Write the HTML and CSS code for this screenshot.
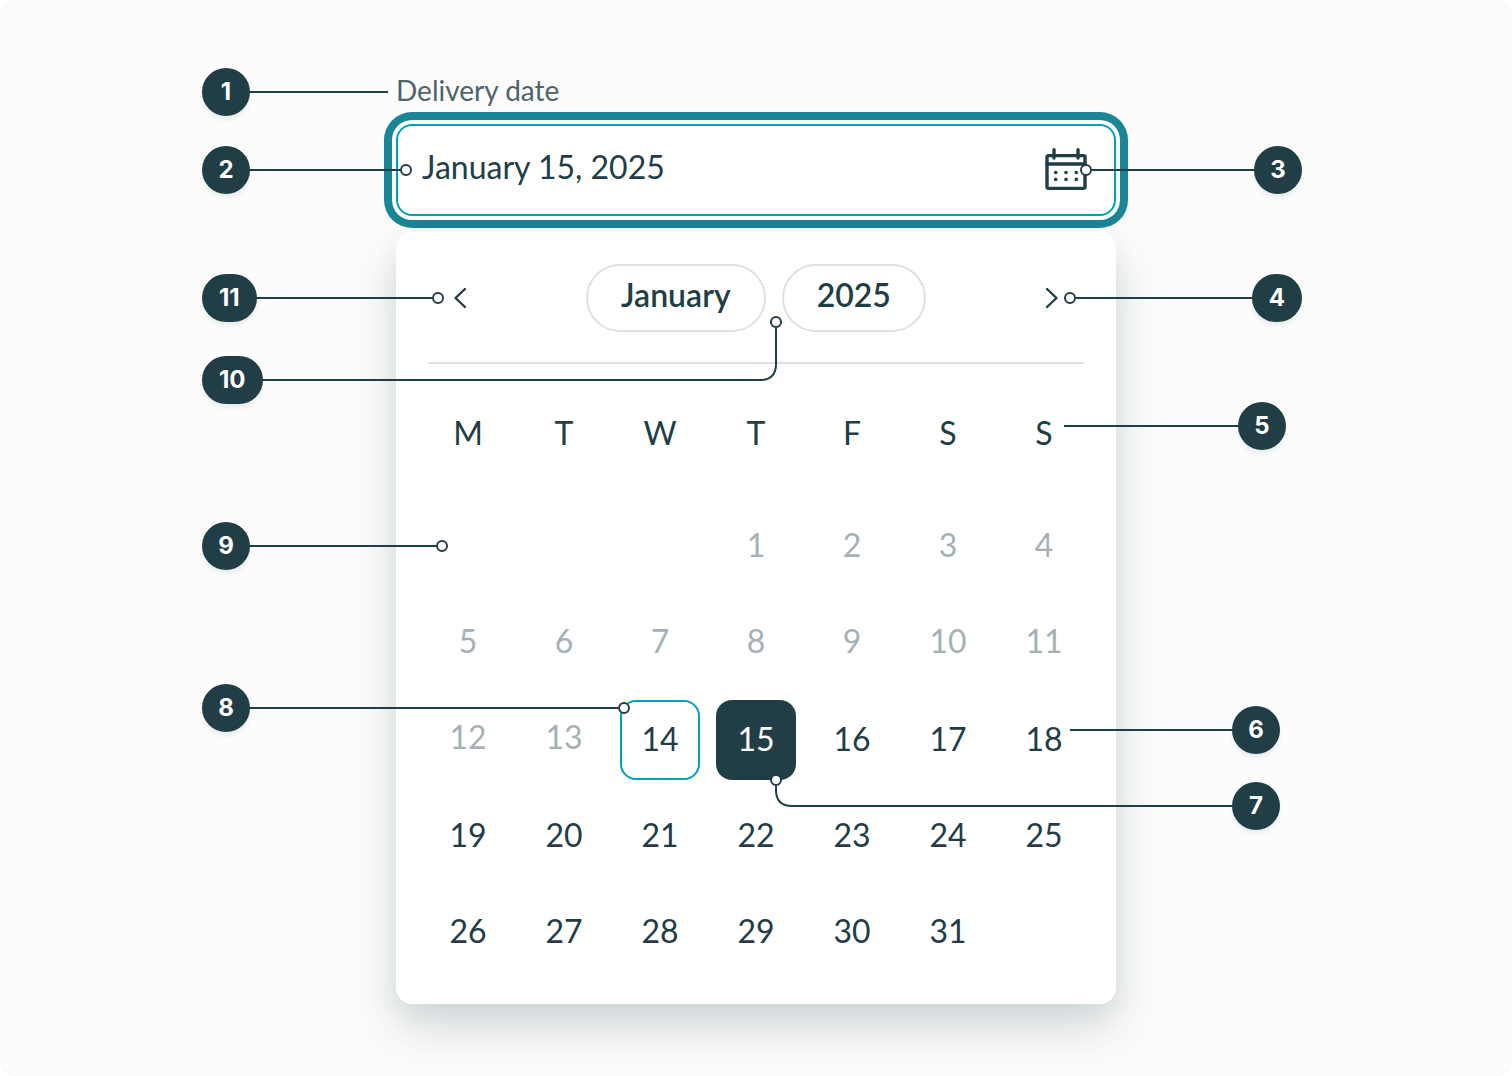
FILE: index.html
```html
<!DOCTYPE html>
<html lang="en">
<head>
    <meta charset="UTF-8">
    <meta name="viewport" content="width=device-width, initial-scale=1.0">
    <title>Date picker anatomy</title>
    <link rel="stylesheet" href="styles.css">
</head>
<body>
    <main class="anatomy">
        <div class="picker">
            <label class="label" for="date">Delivery date</label>
            <div class="field">
                <input class="field-input" type="text" id="date" value="January 15, 2025">
                <button class="field-button" type="button" aria-label="Open calendar">
                    <svg width="48" height="48" viewBox="0 0 48 48" fill="none" stroke="currentColor" stroke-width="3.4" stroke-linecap="round" stroke-linejoin="round">
                        <rect x="5" y="9.6" width="38" height="32.8" rx="1.6"/>
                        <path d="M5 18H43M12 3.6V12M36 3.6V12" />
                        <g fill="currentColor" stroke="none">
                            <circle cx="13.7" cy="26.5" r="1.8"/>
                            <circle cx="24" cy="26.5" r="1.8"/>
                            <circle cx="34.3" cy="26.5" r="1.8"/>
                            <circle cx="13.7" cy="33.4" r="1.8"/>
                            <circle cx="24" cy="33.4" r="1.8"/>
                            <circle cx="34.3" cy="33.4" r="1.8"/>
                        </g>
                    </svg>
                </button>
            </div>

            <section class="calendar">
                <div class="calendar-header">
                    <button class="arrow" type="button" aria-label="Previous month">
                        <svg width="32" height="32" viewBox="0 0 32 32" fill="none" stroke="currentColor" stroke-width="2.4" stroke-linecap="round" stroke-linejoin="round"><path d="M21 7L11.5 16L21 25"/></svg>
                    </button>
                    <div class="pills">
                        <button class="pill" type="button">January</button>
                        <button class="pill" type="button">2025</button>
                    </div>
                    <button class="arrow" type="button" aria-label="Next month">
                        <svg width="32" height="32" viewBox="0 0 32 32" fill="none" stroke="currentColor" stroke-width="2.4" stroke-linecap="round" stroke-linejoin="round"><path d="M11 7L20.5 16L11 25"/></svg>
                    </button>
                </div>
                <table class="days">
                    <thead>
                        <tr><th>M</th><th>T</th><th>W</th><th>T</th><th>F</th><th>S</th><th>S</th></tr>
                    </thead>
                    <tbody>
                        <tr>
                            <td></td>
                            <td></td>
                            <td></td>
                            <td><button class="day" disabled>1</button></td>
                            <td><button class="day" disabled>2</button></td>
                            <td><button class="day" disabled>3</button></td>
                            <td><button class="day" disabled>4</button></td>
                        </tr>
                        <tr>
                            <td><button class="day" disabled>5</button></td>
                            <td><button class="day" disabled>6</button></td>
                            <td><button class="day" disabled>7</button></td>
                            <td><button class="day" disabled>8</button></td>
                            <td><button class="day" disabled>9</button></td>
                            <td><button class="day" disabled>10</button></td>
                            <td><button class="day" disabled>11</button></td>
                        </tr>
                        <tr>
                            <td><button class="day" disabled>12</button></td>
                            <td><button class="day" disabled>13</button></td>
                            <td><button class="day today">14</button></td>
                            <td><button class="day selected">15</button></td>
                            <td><button class="day">16</button></td>
                            <td><button class="day">17</button></td>
                            <td><button class="day">18</button></td>
                        </tr>
                        <tr>
                            <td><button class="day">19</button></td>
                            <td><button class="day">20</button></td>
                            <td><button class="day">21</button></td>
                            <td><button class="day">22</button></td>
                            <td><button class="day">23</button></td>
                            <td><button class="day">24</button></td>
                            <td><button class="day">25</button></td>
                        </tr>
                        <tr>
                            <td><button class="day">26</button></td>
                            <td><button class="day">27</button></td>
                            <td><button class="day">28</button></td>
                            <td><button class="day">29</button></td>
                            <td><button class="day">30</button></td>
                            <td><button class="day">31</button></td>
                            <td></td>
                        </tr>
                    </tbody>
                </table>
            </section>

            <!-- Numbered callouts on top of the picker -->
            <div class="callouts">
                <svg class="leaders" width="1100" height="940" viewBox="0 0 1100 940">
                    <path d="M40 24H186M40 102H198M1060 102H890M1060 230H874M1050 358H862M1050 662H868M40 230H230M50 312H558Q574 312 574 296V260M40 640H416M40 478H234M1040 738H590Q574 738 574 722V718"/>
                    <circle cx="204" cy="102" r="5"/>
                    <circle cx="884" cy="102" r="5"/>
                    <circle cx="868" cy="230" r="5"/>
                    <circle cx="236" cy="230" r="5"/>
                    <circle cx="574" cy="254" r="5"/>
                    <circle cx="240" cy="478" r="5"/>
                    <circle cx="422" cy="640" r="5"/>
                    <circle cx="574" cy="712" r="5"/>
                </svg>
                <span class="badge badge-1">1</span>
                <span class="badge badge-2">2</span>
                <span class="badge badge-3">3</span>
                <span class="badge wide badge-4">4</span>
                <span class="badge badge-5">5</span>
                <span class="badge badge-6">6</span>
                <span class="badge badge-7">7</span>
                <span class="badge badge-8">8</span>
                <span class="badge badge-9">9</span>
                <span class="badge wide badge-10">10</span>
                <span class="badge wide badge-11">11</span>
            </div>
        </div>
    </main>
</body>
</html>
```
FILE: styles.css
```css
* {
    box-sizing: border-box;
}
body {
    margin: 0;
    background: #fff;
    color: #213d46;
    font-family: Lato, "Noto Sans", sans-serif;
}
button,
input {
    font: inherit;
    color: inherit;
    border: none;
    background: none;
    padding: 0;
    margin: 0;
}
button {
    cursor: pointer;
}
svg {
    display: block;
}
.anatomy {
    min-height: 100vh;
    padding: 66px 24px 70px;
    background: #fcfcfc;
    border: 2px solid #fafafa;
    border-radius: 16px;
}

/* Field */
.picker {
    position: relative;
    max-width: 720px;
    margin: 0 auto;
}
.label {
    display: block;
    height: 56px;
    line-height: 44px;
    font-size: 28px;
    color: #4d646b;
}
.field {
    display: flex;
    align-items: center;
    height: 92px;
    padding: 0 24px;
    background: #fff;
    border: 2px solid #00a2b8;
    border-radius: 16px;
    box-shadow: 0 0 0 4px #fff, 0 0 0 12px #1a8595;
}
.field-input {
    flex: 1;
    min-width: 0;
    height: 80px;
    padding-bottom: 8px;
    font-size: 32px;
    outline: none;
}

/* Calendar */
.calendar {
    margin-top: 16px;
    padding-bottom: 24px;
    background: #fff;
    border-radius: 16px;
    box-shadow: 0 24px 48px rgba(33, 61, 70, 0.18), 0 8px 24px rgba(33, 61, 70, 0.06);
}
.calendar-header {
    display: flex;
    align-items: center;
    justify-content: space-between;
    margin: 0 32px;
    padding: 32px 0 30px;
    border-bottom: 2px solid #dce1e4;
}
.arrow {
    padding: 16px;
}
.pills {
    display: flex;
    gap: 16px;
}
.pill {
    height: 68px;
    padding: 0 33px 8px;
    border: 2px solid #dce1e4;
    border-radius: 34px;
    font-size: 32px;
    font-weight: 600;
}
.days {
    width: calc(100% - 48px);
    margin: 24px 24px 0;
    border-collapse: collapse;
    table-layout: fixed;
    font-size: 32px;
}
.days th {
    height: 112px;
    padding: 0 0 24px;
    font-weight: 400;
}
.days td {
    height: 96px;
    padding: 8px;
}
.day {
    display: block;
    width: 100%;
    height: 80px;
    padding-bottom: 4px;
    border-radius: 16px;
}
.day:disabled {
    padding-bottom: 8px;
    color: #a6b1b5;
}
.today {
    border: 2px solid #00a2b8;
}
.selected {
    background: #213d46;
    color: #fff;
}

/* Callouts */
.callouts {
    position: absolute;
    top: 0;
    left: -194px;
    width: 1100px;
    height: 940px;
    pointer-events: none;
}
.leaders {
    fill: none;
    stroke: #213d46;
    stroke-width: 2;
}
.leaders circle {
    fill: #fff;
}
.badge {
    position: absolute;
    left: 0;
    min-width: 48px;
    height: 48px;
    padding: 0 14px;
    border-radius: 24px;
    background: #213d46;
    box-shadow: 0 4px 4px rgba(33, 61, 70, 0.08);
    color: #fff;
    font-family: Inter, sans-serif;
    font-size: 24px;
    font-weight: 700;
    line-height: 48px;
    text-align: center;
}
.wide {
    padding: 0 17px;
}
.badge-1 {
    top: 0;
}
.badge-2 {
    top: 78px;
}
.badge-3 {
    top: 78px;
    left: auto;
    right: 0;
}
.badge-4 {
    top: 206px;
    left: auto;
    right: 0;
}
.badge-5 {
    top: 334px;
    left: auto;
    right: 16px;
}
.badge-6 {
    top: 638px;
    left: auto;
    right: 22px;
}
.badge-7 {
    top: 714px;
    left: auto;
    right: 22px;
}
.badge-8 {
    top: 616px;
}
.badge-9 {
    top: 454px;
}
.badge-10 {
    top: 288px;
}
.badge-11 {
    top: 206px;
}
```
